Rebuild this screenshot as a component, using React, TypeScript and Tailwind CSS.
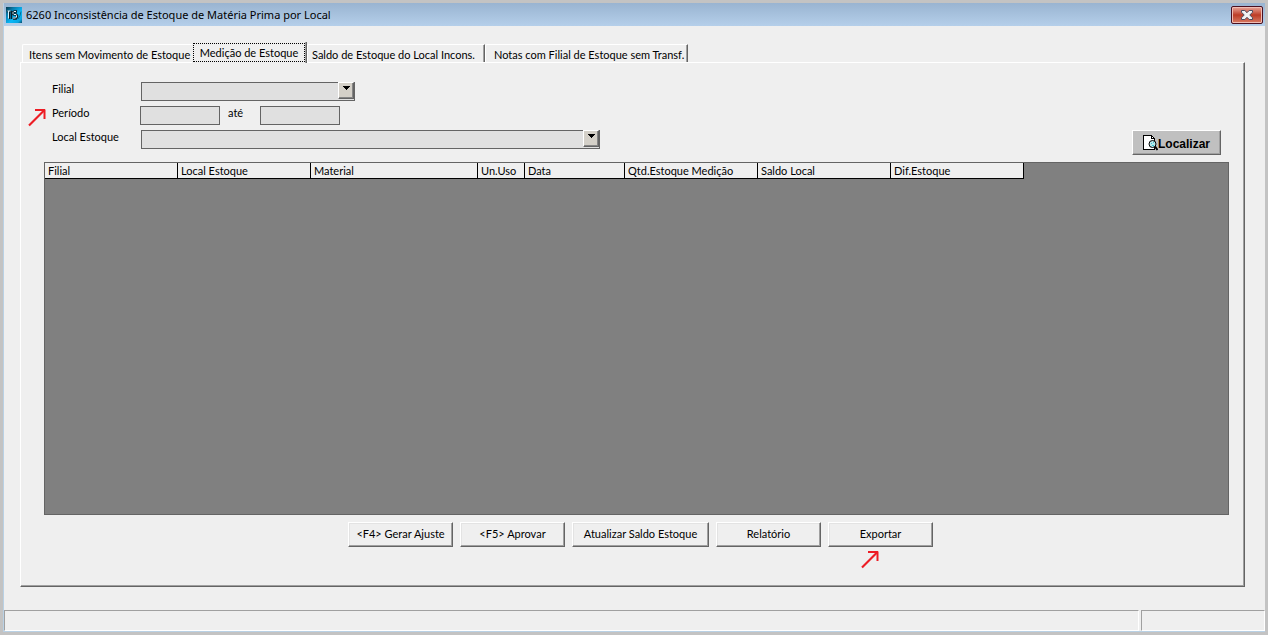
import React from 'react';
import { clsx } from 'clsx';

const tabs = [
  { label: 'Itens sem Movimento de Estoque', box: 'w-[170px] pl-1.5' },
  { label: 'Medição de Estoque', box: 'w-[115px]' },
  { label: 'Saldo de Estoque do Local Incons.', box: 'w-[178px] pl-1' },
  { label: 'Notas com Filial de Estoque sem Transf.', box: 'w-[203px] pl-2' },
];

const columns = [
  { label: 'Filial', width: 'w-[133px]' },
  { label: 'Local Estoque', width: 'w-[133px]' },
  { label: 'Material', width: 'w-[167px]' },
  { label: 'Un.Uso', width: 'w-[47px]' },
  { label: 'Data', width: 'w-[100px]' },
  { label: 'Qtd.Estoque Medição', width: 'w-[133px]' },
  { label: 'Saldo Local', width: 'w-[133px]' },
  { label: 'Dif.Estoque', width: 'w-[133px]' },
];

const actions = [
  { label: '<F4> Gerar Ajuste', width: 'w-[105px]' },
  { label: '<F5> Aprovar', width: 'w-[105px]' },
  { label: 'Atualizar Saldo Estoque', width: 'w-[137px]' },
  { label: 'Relatório', width: 'w-[105px]' },
  { label: 'Exportar', width: 'w-[105px]', marked: true },
];

const raised =
  'border border-t-white border-l-white border-r-[#646464] border-b-[#646464]';

const RedArrow: React.FC<{ className: string }> = ({ className }) => (
  <svg
    className={clsx('absolute pointer-events-none', className)}
    width="18"
    height="18"
    viewBox="0 0 18 18"
    fill="none"
    stroke="#ed1c24"
    aria-hidden="true"
  >
    <path d="M1 16.5L16 1.5" strokeWidth="2.2" />
    <path d="M7 1H17M16.5 .5V10" strokeWidth="2" />
  </svg>
);

const AppIcon = () => (
  <svg width="16" height="16" viewBox="0 0 16 16" aria-hidden="true">
    <defs>
      <linearGradient id="appIcon" x1="0" y1="0" x2="1" y2="1">
        <stop offset="0" stopColor="#083848" />
        <stop offset="0.25" stopColor="#0878a8" />
        <stop offset="0.6" stopColor="#08b8f8" />
        <stop offset="0.85" stopColor="#08a4e0" />
        <stop offset="1" stopColor="#064a68" />
      </linearGradient>
    </defs>
    <rect width="16" height="16" fill="url(#appIcon)" />
    <path d="M1 4.5h5M3.5 4v8M5.5 4v8" stroke="#06202c" strokeWidth="1.4" />
    <path d="M1.5 4h3M2.5 4v7.5" stroke="#d8f4ff" strokeWidth="1" />
    <path d="M11 4.5H8.5l-1.5 1v1l1 1h2l1 1v1.5l-1 1.5H7" fill="none" stroke="#06202c" strokeWidth="2.4" />
    <path d="M10 4.5H8l-1 1v1l1 1h2l.5 1v1.5l-1 1H7" fill="none" stroke="#e4f8ff" strokeWidth="1" />
    <path d="M12 12l2-3.5 1-4" fill="none" stroke="#067098" />
  </svg>
);

const CloseIcon = () => (
  <svg width="12" height="10" viewBox="0 0 12 10" aria-hidden="true">
    <path
      d="M.5.5h3.3L6 2.7 8.2.5h3.3v1.7L8.8 5l2.7 2.8v1.7H8.2L6 7.3 3.8 9.5H.5V7.8L3.2 5 .5 2.2z"
      fill="#f2f2f2"
      stroke="#4a4c60"
    />
  </svg>
);

const SearchPageIcon = () => (
  <svg width="15" height="16" viewBox="0 0 15 16" shapeRendering="crispEdges" aria-hidden="true">
    <path d="M.5.5h8l3 3v11H.5z" fill="#fff" stroke="#000" />
    <path d="M8.5.5v3h3" fill="none" stroke="#000" />
    <circle cx="9.5" cy="9" r="3.5" fill="#b8e8ec" stroke="#000" shapeRendering="auto" />
    <path d="M8 8h1v1H8zM9 10h2v1H9zM10 7h1v1h-1z" fill="#38c4d0" />
    <path d="M12 11.5l2.5 3.5" stroke="#000" strokeWidth="2" shapeRendering="auto" />
  </svg>
);

interface ComboProps {
  id: string;
  label: string;
  width: string;
}

const Combo: React.FC<ComboProps> = ({ id, label, width }) => (
  <div className="flex items-start">
    <label htmlFor={id} className="w-[89px] leading-[13px]">
      {label}
    </label>
    <div className={clsx('relative h-[19px]', width)}>
      <select
        id={id}
        className="block w-full h-full appearance-none border border-[#646464] bg-[#e0e0e0] outline-none"
      >
        <option value="" />
      </select>
      <span
        className={clsx(
          'absolute top-0 right-px w-4 h-[17px] flex justify-center pt-[3px] bg-[#d4d0c8] pointer-events-none shadow-[inset_-1px_-1px_0_#868686]',
          raised
        )}
      >
        <svg width="7" height="4" viewBox="0 0 7 4" shapeRendering="crispEdges" aria-hidden="true">
          <path d="M0 0h7v1H0zM1 1h5v1H1zM2 2h3v1H2zM3 3h1v1H3z" />
        </svg>
      </span>
    </div>
  </div>
);

export default function App() {
  const [active, setActive] = React.useState(1);

  return (
    <div className="min-h-screen flex flex-col bg-[#c3c3c3] p-[3px] font-[Lato,'Liberation_Sans',sans-serif] text-[11px] text-black">
      <div className="flex-1 flex flex-col border-l border-b border-[#b9d1e5] bg-[#efefef]">
        <header className="flex h-[23px] items-center justify-between bg-linear-to-b from-[#99b4d1] to-[#b5cfea] pl-[2px] pr-[2px]">
          <div className="flex items-center gap-1">
            <AppIcon />
            <h1 className="font-['Noto_Sans','Open_Sans',sans-serif] text-[11px] leading-4">
              6260 Inconsistência de Estoque de Matéria Prima por Local
            </h1>
          </div>
          <button
            type="button"
            aria-label="Fechar"
            className="flex h-[18px] w-8 items-center justify-center rounded-xs border border-[#4a1020] bg-linear-to-b from-[#e8a59a] from-0% via-[#bc3c26] via-50% to-[#d87a62] shadow-[inset_0_0_0_1px_#f0bdb4]"
          >
            <CloseIcon />
          </button>
        </header>

        <main className="flex-1 flex flex-col pt-4 pl-4 pr-5 pb-[23px]">
          <div role="tablist" className="relative z-10 flex items-end pl-[2px]">
            {tabs.map((tab, i) => (
              <button
                key={tab.label}
                type="button"
                role="tab"
                aria-selected={i === active}
                onClick={() => setActive(i)}
                className={clsx(
                  'whitespace-nowrap text-left shrink-0 bg-[#efefef]',
                  tab.box,
                  i === active
                    ? '-mb-px h-[21px] pt-px pb-px pl-px border-r border-[#646464] shadow-[inset_-1px_0_0_#a0a0a0]'
                    : 'h-[18px] rounded-tl-xs border-t border-l border-t-white border-l-white',
                  i !== active && i > active && 'border-r border-r-[#646464] shadow-[inset_-1px_0_0_#a0a0a0]'
                )}
              >
                {i === active ? (
                  <span className="flex h-full w-[112px] items-center justify-center border border-dotted border-black pt-[2px]">
                    {tab.label}
                  </span>
                ) : (
                  <span className="block pt-[2px] leading-[15px]">{tab.label}</span>
                )}
              </button>
            ))}
          </div>

          <section
            role="tabpanel"
            className="flex-1 flex flex-col border border-t-white border-l-white border-r-[#646464] border-b-[#646464] pt-[19px] pl-[23px] pr-[15px] pb-[39px] shadow-[inset_-1px_-1px_0_#a0a0a0]"
          >
            <div className="flex items-end justify-between pl-2 pr-2">
              <form className="flex flex-col gap-[5px] pb-[6px]">
                <Combo id="filial" label="Filial" width="w-[214px]" />
                <div className="relative flex items-start">
                  <RedArrow className="-left-6 top-[3px]" />
                  <label htmlFor="inicio" className="w-[88px] leading-[13px]">
                    Período
                  </label>
                  <input
                    id="inicio"
                    type="text"
                    className="h-[19px] w-20 border border-[#646464] bg-[#e0e0e0] px-1 outline-none"
                  />
                  <label htmlFor="fim" className="w-10 pl-2 leading-[13px]">
                    até
                  </label>
                  <input
                    id="fim"
                    type="text"
                    className="h-[19px] w-20 border border-[#646464] bg-[#e0e0e0] px-1 outline-none"
                  />
                </div>
                <Combo id="local" label="Local Estoque" width="w-[459px]" />
              </form>
              <button
                type="button"
                className={clsx(
                  "flex h-[25px] w-[89px] items-center justify-center bg-[#c0c0c0] font-['Liberation_Sans',sans-serif] text-xs font-bold shadow-[inset_-1px_-1px_0_#a0a0a0]",
                  raised
                )}
              >
                <SearchPageIcon />
                <span className="pt-[3px]">Localizar</span>
              </button>
            </div>

            <div className="mt-[7px] flex-1 border border-[#646464] bg-[#808080]">
              <table className="table-fixed border-separate border-spacing-0 w-[979px]">
                <thead>
                  <tr className="h-4 bg-[#efefef]">
                    {columns.map((col) => (
                      <th
                        key={col.label}
                        scope="col"
                        className={clsx(
                          'p-0 pl-[3px] text-left font-normal leading-[15px] whitespace-nowrap border-r border-b border-black',
                          col.width
                        )}
                      >
                        {col.label}
                      </th>
                    ))}
                  </tr>
                </thead>
              </table>
            </div>

            <div className="mt-[7px] flex justify-center gap-[7px] pl-2">
              {actions.map((action) => (
                <div key={action.label} className="relative">
                  <button
                    type="button"
                    className={clsx(
                      'h-[25px] bg-[#efefef] whitespace-nowrap shadow-[inset_-1px_-1px_0_#a0a0a0,inset_1px_1px_0_#e3e3e3]',
                      raised,
                      action.width
                    )}
                  >
                    {action.label}
                  </button>
                  {action.marked && <RedArrow className="left-[33px] top-[29px]" />}
                </div>
              ))}
            </div>
          </section>
        </main>

        <footer className="flex h-[21px] gap-[2px]">
          <div className="flex-1 border border-t-[#a0a0a0] border-l-[#a0a0a0] border-r-white border-b-white" />
          <div className="w-[124px] border border-t-[#a0a0a0] border-l-[#a0a0a0] border-r-white border-b-white" />
        </footer>
      </div>
    </div>
  );
}
